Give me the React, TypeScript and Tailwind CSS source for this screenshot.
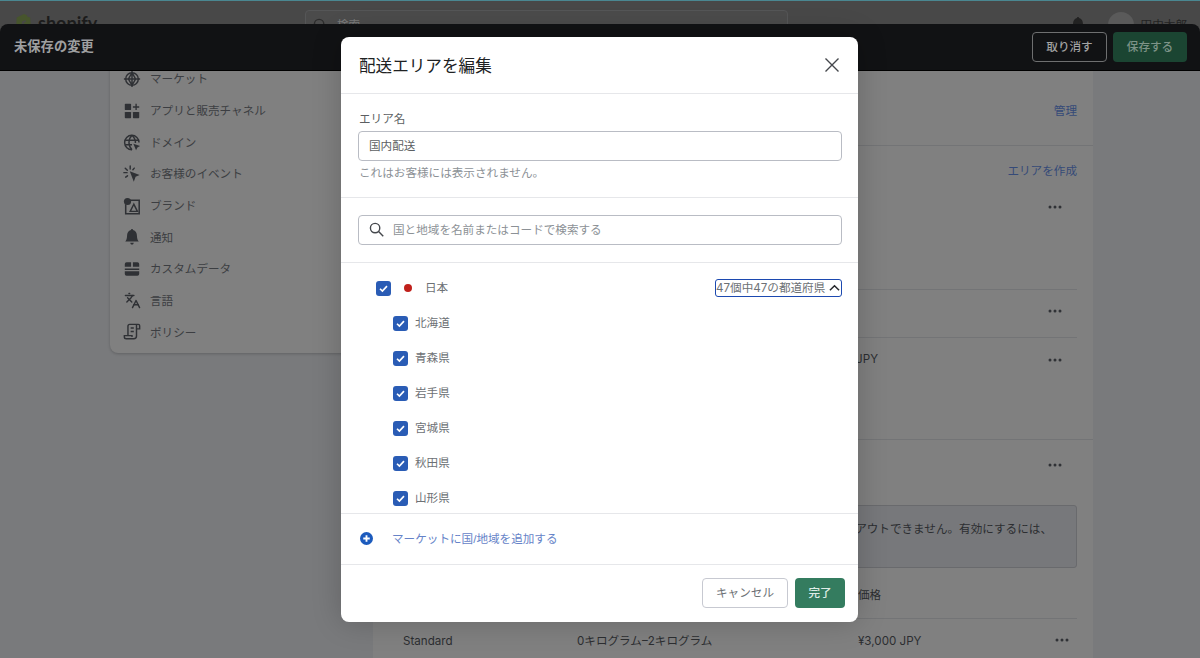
import { Languages } from "lucide-react";

const navItems = [
  { label: "マーケット", icon: <MarketIcon /> },
  { label: "アプリと販売チャネル", icon: <AppsIcon /> },
  { label: "ドメイン", icon: <DomainIcon /> },
  { label: "お客様のイベント", icon: <EventsIcon /> },
  { label: "ブランド", icon: <BrandIcon /> },
  { label: "通知", icon: <BellIcon /> },
  { label: "カスタムデータ", icon: <DataIcon /> },
  { label: "言語", icon: <Languages className="h-[17px] w-[17px]" strokeWidth={2} /> },
  { label: "ポリシー", icon: <PolicyIcon /> },
];

const prefectures = ["北海道", "青森県", "岩手県", "宮城県", "秋田県", "山形県"];

function MarketIcon() {
  return (
    <svg viewBox="0 0 20 20" className="h-[18px] w-[18px]" fill="none" stroke="currentColor" strokeWidth="1.6">
      <circle cx="10" cy="10" r="7" />
      <path d="M10 1v18M1 10h18M10 3l4 7-4 7-4-7z" />
    </svg>
  );
}

function AppsIcon() {
  return (
    <svg viewBox="0 0 20 20" className="h-[18px] w-[18px]" fill="currentColor">
      <rect x="2" y="2" width="7" height="7" rx="0.8" />
      <rect x="2" y="11" width="7" height="7" rx="0.8" />
      <rect x="11" y="11" width="7" height="7" rx="0.8" />
      <path d="M13.8 2h1.5v2.8H18v1.5h-2.7V9h-1.5V6.3H11V4.8h2.8z" />
    </svg>
  );
}

function DomainIcon() {
  return (
    <svg viewBox="0 0 20 20" className="h-[19px] w-[19px]">
      <g fill="none" stroke="currentColor" strokeWidth="1.6">
        <path d="M17.8 10A8 8 0 1 0 10 18" />
        <path d="M10 2c-4.5 4.5-4.5 11.500 0 16M10 2c3 3 4 6 3.800 8.500M2.500 7.500h15M2.500 12.500H10" />
      </g>
      <path d="M11.500 11.500l7.500 2.500-3 1.500-1.500 3z" fill="currentColor" />
    </svg>
  );
}

function EventsIcon() {
  return (
    <svg viewBox="0 0 20 20" className="h-[18px] w-[18px]">
      <path d="M7.500 7l11 4-4.500 2-2 5.500z" fill="currentColor" />
      <path
        d="M8 1v3.500M2.500 3.500l2.300 2.300M1 8.500h3.500M3 13.500l2-1.500M12.500 3.500l-1.500 1.800"
        stroke="currentColor"
        strokeWidth="1.6"
        strokeLinecap="round"
      />
    </svg>
  );
}

function BrandIcon() {
  return (
    <svg viewBox="0 0 20 20" className="h-[18px] w-[18px]">
      <path d="M5 3.500h13v15H3V8" fill="none" stroke="currentColor" strokeWidth="1.7" />
      <path d="M12 8l-4 8h8z" fill="none" stroke="currentColor" strokeWidth="1.6" />
      <circle cx="5" cy="5" r="4" fill="currentColor" />
    </svg>
  );
}

function BellIcon() {
  return (
    <svg viewBox="0 0 20 20" className="h-[18px] w-[18px]" fill="currentColor">
      <path d="M10 1a1.200 1.200 0 0 1 1.200 1.300C14 3 15.500 5.500 15.500 8.500c0 3 .8 5 2 6.500h-15c1.200-1.500 2-3.500 2-6.500 0-3 1.500-5.500 4.300-6.200A1.200 1.200 0 0 1 10 1z" />
      <path d="M8 16.500h4a2 2 0 0 1-4 0z" />
    </svg>
  );
}

function DataIcon() {
  return (
    <svg viewBox="0 0 20 20" className="h-[18px] w-[18px]" fill="currentColor">
      <path d="M4 2.500h5v5H2v-3a2 2 0 0 1 2-2zM11 2.500h5a2 2 0 0 1 2 2v3h-7zM2 9.500h16V11H2zM2 12.500h16v3a2 2 0 0 1-2 2H4a2 2 0 0 1-2-2z" />
    </svg>
  );
}

function PolicyIcon() {
  return (
    <svg viewBox="0 0 20 20" className="h-[18px] w-[18px]" fill="none" stroke="currentColor" strokeWidth="1.6">
      <path d="M5.500 14V3.500a2 2 0 0 1 2-2H17a1.500 1.500 0 0 1 1.500 1.500v3.500h-3.500V3M15 2v12.500a3 3 0 0 1-3 3H3.500a2 2 0 0 1-2-2V14h8.500v1.500" />
      <path d="M8.500 5.500h3.500M8.500 9.500h3.500" />
    </svg>
  );
}

function Dots() {
  return (
    <svg viewBox="0 0 14 4" className="h-1 w-[14px] text-[#303236]" fill="currentColor">
      <circle cx="2" cy="2" r="1.500" />
      <circle cx="7" cy="2" r="1.500" />
      <circle cx="12" cy="2" r="1.500" />
    </svg>
  );
}

function Check({ className }: { className: string }) {
  return (
    <span className={`flex shrink-0 items-center justify-center rounded-[3px] bg-[#2a5cb5] ${className}`}>
      <svg viewBox="0 0 12 12" className="h-[11px] w-[11px]" fill="none" stroke="#fff" strokeWidth="1.800">
        <path d="M2.200 6.300l2.600 2.500 5-5.400" />
      </svg>
    </span>
  );
}

function Page() {
  return (
    <div className="flex h-full flex-col bg-[#797a7c]">
      <div className="h-px bg-[#4a8791]" />
      <header className="flex h-[55px] shrink-0 items-start bg-[#484848]">
        <div className="flex w-[305px] items-start gap-[6px] pl-[14px] pt-[11px]">
          <svg viewBox="0 0 20 22" className="h-[22px] w-[18px] shrink-0">
            <path d="M3 5l8-4 3 1 1 2 3 1 1 14-12 3-5-1z" fill="#47552d" />
            <path d="M8 17l1-2c2 .6 3-.1 2.200-1-1-1-3-1.500-2.600-3.500.4-2 2.800-2.800 4.900-2.200l-.7 2c-1.500-.5-2.300 0-2 .700.5.9 3 1.500 2.700 3.700-.3 2.500-3.200 3.200-5.500 2.300z" fill="#484848" />
          </svg>
          <span className="-mt-[1px] font-['Lato'] text-[18px] font-bold leading-[24px] text-[#1c1c1c]">shopify</span>
        </div>
        <div className="mt-[9px] flex h-[30px] w-[483px] items-center rounded-[4px] border border-[#555657] bg-[#4b4b4b] pl-[7px] text-[11.6px] text-[#7a7a7a]">
          <svg viewBox="0 0 16 16" className="h-[15px] w-[15px]" fill="none" stroke="#2c2c2c" strokeWidth="1.500">
            <circle cx="6.500" cy="6.500" r="5" />
            <path d="M10.200 10.200l5 5" />
          </svg>
          <span className="ml-[9px]">検索</span>
        </div>
        <div className="ml-auto flex items-center pr-[13px] pt-[11px] text-[#222]">
          <BellIcon />
          <span className="ml-[21px] h-[26px] w-[26px] rounded-full bg-[#5a5a5a]" />
          <span className="ml-[7px] text-[11.6px]">田中太郎</span>
        </div>
      </header>

      <div className="flex min-h-0 flex-1 pl-[110px]">
        <aside className="h-[297px] w-[263px] rounded-b-lg bg-[#808080] pl-[13px] pt-[7px] shadow-[0_1px_3px_rgba(0,0,0,0.2)]">
          {navItems.map((item) => (
            <div key={item.label} className="flex h-[31.700px] items-center text-[#2f3135]">
              <span className="flex w-[18px] items-center justify-center">{item.icon}</span>
              <span className="ml-[9px] text-[11.6px] text-[#3c3e42]">{item.label}</span>
            </div>
          ))}
        </aside>

        <main className="h-full w-[720px] shrink-0 overflow-hidden bg-[#808080] text-[11.6px] text-[#2c2e31]">
          <section className="flex h-[90px] items-end justify-end border-b border-[#737476] pb-[26px] pr-4 text-[#354a78]">
            管理
          </section>
          <section className="h-[294px] border-b border-[#737476] pr-4">
            <div className="flex h-[50px] items-center justify-end text-[#354a78]">エリアを作成</div>
            <div className="flex h-[94px] items-start justify-end border-b border-[#737476] pr-[15px] pt-[9px]">
              <Dots />
            </div>
            <div className="flex h-[48px] items-center justify-end border-b border-[#737476] pr-[15px] pb-[6px]">
              <Dots />
            </div>
            <div className="flex items-center justify-between pr-[15px] pt-[13px]">
              <span className="w-[505px] text-right font-['Inter']">¥1,000 JPY</span>
              <Dots />
            </div>
          </section>
          <section className="pr-4">
            <div className="flex h-[65px] items-start justify-end pr-[15px] pt-[23px]">
              <Dots />
            </div>
            <div className="h-[63px] rounded-[3px] border border-[#696a6d] bg-[#77787b] pr-[24px] pt-[14px] text-right">
              チェックアウトできません。有効にするには、
            </div>
            <div className="flex h-[51px] items-center border-b border-[#737476] pl-[485px] pt-[4px]">価格</div>
            <div className="flex h-[42px] items-center">
              <span className="ml-[30px] w-[174px] pt-[4px] font-['Inter','Noto_Sans_CJK_JP']">Standard</span>
              <span className="w-[281px] pt-[4px] font-['Inter','Noto_Sans_CJK_JP']">0キログラム–2キログラム</span>
              <span className="w-[197px] pt-[4px] font-['Inter']">¥3,000 JPY</span>
              <Dots />
            </div>
          </section>
        </main>
      </div>
    </div>
  );
}

function SaveBar() {
  return (
    <div className="absolute inset-x-0 top-6 flex h-[47px] items-center justify-between rounded-t-lg border-b border-black bg-[#111214] pl-[14px] pr-[13px]">
      <span className="text-[13.300px] font-semibold text-[#9e9fa0]">未保存の変更</span>
      <div className="flex items-center gap-[6px]">
        <button className="h-[30px] w-[75px] rounded-[4px] border border-[#6e6f70] text-[11.6px] font-medium text-[#a2a3a3]">
          取り消す
        </button>
        <button className="h-[30px] w-[74px] rounded-[4px] bg-[#1b4532] text-[11.6px] font-medium text-[#7d9387]">
          保存する
        </button>
      </div>
    </div>
  );
}

function Modal() {
  return (
    <div className="absolute inset-0 flex items-center justify-center pr-px">
      <div className="flex h-[585px] w-[517px] flex-col overflow-hidden rounded-lg bg-white shadow-[0_0_30px_rgba(0,0,0,0.2)]">
        <div className="flex h-[57px] shrink-0 items-center justify-between border-b border-[#e6e7ea] pl-[18px] pr-[18px]">
          <h1 className="mt-[6px] text-[16.600px] font-normal text-[#202223]">配送エリアを編集</h1>
          <svg viewBox="0 0 16 16" className="h-4 w-4" fill="none" stroke="#44474c" strokeWidth="1.400">
            <path d="M1.500 1.500l13 13M14.500 1.500l-13 13" />
          </svg>
        </div>

        <div className="h-[104px] shrink-0 border-b border-[#e6e7ea] pl-[17px] pr-[16px] pt-[17px]">
          <label className="block pl-px text-[11.6px] leading-[16px] text-[#5c5f62]">エリア名</label>
          <div className="mt-[4px] flex h-[30px] items-center rounded-[4px] border border-[#b9bcc4] px-[10px] text-[11.6px] text-[#5c5f62]">
            国内配送
          </div>
          <p className="mt-[4px] pl-px text-[11.6px] leading-[16px] text-[#8c9196]">これはお客様には表示されません。</p>
        </div>

        <div className="h-[65px] shrink-0 border-b border-[#e6e7ea] pl-[17px] pr-[16px] pt-[17px]">
          <div className="flex h-[30px] items-center rounded-[4px] border border-[#b9bcc4] pl-[10px] text-[11.6px] text-[#8c9196]">
            <svg viewBox="0 0 16 16" className="h-[15px] w-[15px]" fill="none" stroke="#44474c" strokeWidth="1.500">
              <circle cx="6.500" cy="6.500" r="5" />
              <path d="M10.200 10.200l5 5" />
            </svg>
            <span className="ml-[9px]">国と地域を名前またはコードで検索する</span>
          </div>
        </div>

        <div className="min-h-0 flex-1 overflow-hidden pt-[8px] text-[11.6px] text-[#6d7175]">
          <div className="flex h-[35px] items-center pl-[35px] pr-[16px]">
            <Check className="h-[15px] w-[15px]" />
            <span className="ml-[13px] h-2 w-2 rounded-full bg-[#c0201b]" />
            <span className="ml-[13px]">日本</span>
            <button className="ml-auto flex h-[18px] w-[127px] items-center rounded-[3px] border-[1.5px] border-[#1c49b0] pr-[1px] text-[#6d7175]">
              <span className="whitespace-nowrap pt-px font-['Inter','Noto_Sans_CJK_JP']">47個中47の都道府県</span>
              <svg viewBox="0 0 12 8" className="ml-auto h-[8px] w-[11px]" fill="none" stroke="#26282c" strokeWidth="1.600">
                <path d="M1 6.500l5-5 5 5" />
              </svg>
            </button>
          </div>
          {prefectures.map((name) => (
            <div key={name} className="flex h-[35px] items-center pl-[52px]">
              <Check className="h-[15px] w-[15px]" />
              <span className="ml-[7px]">{name}</span>
            </div>
          ))}
        </div>

        <div className="flex h-[52px] shrink-0 items-center border-y border-[#e6e7ea] pl-[19px] text-[11.6px] text-[#6683c8]">
          <svg viewBox="0 0 14 14" className="h-[13px] w-[13px]">
            <circle cx="7" cy="7" r="7" fill="#1c5bbd" />
            <path d="M7 3.500v7M3.500 7h7" stroke="#fff" strokeWidth="2" />
          </svg>
          <span className="ml-[19px]">マーケットに国/地域を追加する</span>
        </div>

        <div className="flex h-[57px] shrink-0 items-center justify-end gap-[7px] pr-[13px]">
          <button className="h-[30px] w-[86px] rounded-[4px] border border-[#c7c9d1] text-[11.6px] text-[#6d7175]">
            キャンセル
          </button>
          <button className="h-[30px] w-[50px] rounded-[4px] bg-[#347c5f] text-[11.6px] font-medium text-[#dfece6]">
            完了
          </button>
        </div>
      </div>
    </div>
  );
}

export default function App() {
  return (
    <div className="relative h-[658px] w-[1200px] overflow-hidden font-['Liberation_Sans','Noto_Sans_CJK_JP',sans-serif]">
      <Page />
      <SaveBar />
      <Modal />
    </div>
  );
}
